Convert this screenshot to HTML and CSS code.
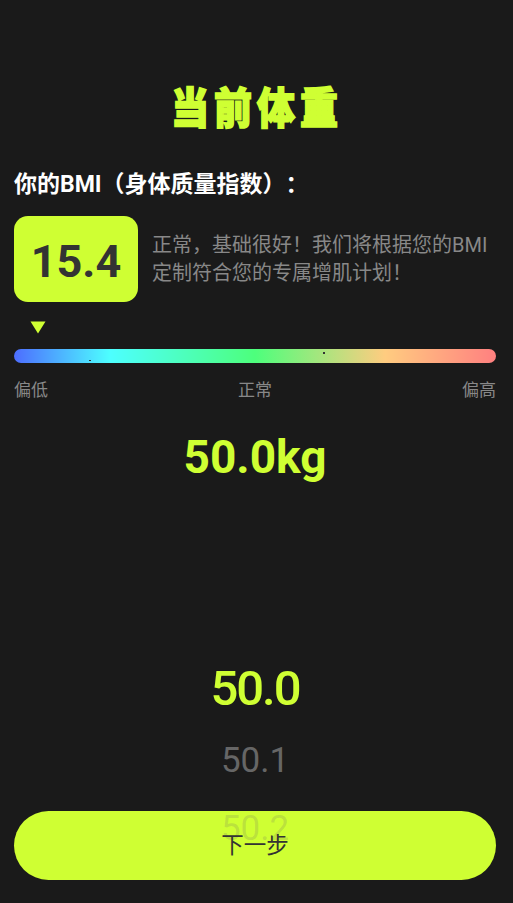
FILE: index.html
```html
<!DOCTYPE html>
<html lang="en">
<head>
    <meta charset="UTF-8">
    <meta name="viewport" content="width=device-width, initial-scale=1.0">
    <title>当前体重</title>
    <link rel="stylesheet" href="styles.css">
</head>
<body>
    <div class="container">
        <h1 class="title">当前体重</h1>
        <h2 class="bmi-heading">你的BMI（身体质量指数）：</h2>
        <div class="bmi-row">
            <div class="bmi-value">15.4</div>
            <p class="bmi-text">正常，基础很好！我们将根据您的BMI定制符合您的专属增肌计划！</p>
        </div>
        <div class="marker-row">
            <svg class="marker" width="16" height="13" viewBox="0 0 16 13">
                <path d="M0.5 0.5H15.5L8 12.5Z" fill="#cfff33"/>
            </svg>
        </div>
        <div class="scale-bar">
            <span class="speck speck-low"></span>
            <span class="speck speck-high"></span>
        </div>
        <div class="scale-labels">
            <span>偏低</span>
            <span>正常</span>
            <span>偏高</span>
        </div>
        <div class="current-weight">50.0kg</div>
        <div class="picker">
            <div class="picker-item picker-active">50.0</div>
            <div class="picker-item">50.1</div>
            <div class="picker-item picker-faded">50.2</div>
        </div>
    </div>
    <button class="next-btn"><span class="next-label">下一步</span></button>
</body>
</html>
```

FILE: styles.css
```css
body {
    margin: 0;
    height: 903px;
    overflow: hidden;
    position: relative;
    background-color: #1a1a1a;
    font-family: Roboto, "Noto Sans CJK SC", sans-serif;
    text-spacing-trim: space-all;
}

.container {
    padding: 78px 17px 0 14px;
}

.title {
    margin: 0;
    padding-left: 4px;
    height: 56px;
    line-height: 56px;
    text-align: center;
    font-family: "Noto Sans CJK SC", sans-serif;
    font-size: 38px;
    font-weight: 900;
    letter-spacing: 5px;
    color: #cfff33;
    -webkit-text-stroke: 1.5px #cfff33;
    transform: scaleY(1.15);
}

.bmi-heading {
    margin: 33px 0 0;
    height: 36px;
    line-height: 36px;
    font-size: 23px;
    font-weight: 700;
    color: #fff;
}

.bmi-row {
    display: flex;
    align-items: center;
    gap: 14px;
    margin-top: 13px;
}

.bmi-value {
    flex: none;
    width: 124px;
    height: 86px;
    line-height: 92px;
    border-radius: 14px;
    background-color: #cfff33;
    color: #333;
    font-size: 45px;
    font-weight: 700;
    text-align: center;
}

.bmi-text {
    margin: 0;
    font-size: 20px;
    line-height: 28px;
    color: #888;
}

.marker-row {
    height: 28px;
    padding: 19px 0 0 16px;
}

.marker {
    display: block;
}

.scale-bar {
    position: relative;
    height: 14px;
    border-radius: 7px;
    background: linear-gradient(to right, #4d6dff 0%, #4dffff 20%, #4dff7c 50%, #ffcc80 77%, #ff8080 100%);
}

.speck {
    position: absolute;
    background-color: #333;
}

.speck-low {
    left: 75px;
    top: 11px;
    width: 2px;
    height: 1px;
}

.speck-high {
    left: 309px;
    top: 3px;
    width: 2px;
    height: 2px;
}

.scale-labels {
    display: flex;
    justify-content: space-between;
    margin-top: 15px;
    line-height: 24px;
    font-size: 17px;
    color: #888;
}

.current-weight {
    margin-top: 25px;
    height: 60px;
    line-height: 60px;
    text-align: center;
    font-size: 46px;
    font-weight: 700;
    color: #cfff33;
}

/* sits above the button background, below its label */
.picker {
    position: relative;
    z-index: 1;
    margin-top: 163px;
}

.picker-item {
    height: 68px;
    line-height: 68px;
    text-align: center;
    font-size: 35px;
    color: #666;
}

.picker-active {
    height: 77px;
    line-height: 77px;
    font-size: 49px;
    font-weight: 500;
    letter-spacing: -2px;
    color: #cfff33;
}

.picker-faded {
    color: rgba(102, 102, 102, 0.2);
}

.next-btn {
    position: absolute;
    left: 14px;
    top: 811px;
    width: 482px;
    height: 69px;
    padding: 0 0 6px;
    border: none;
    border-radius: 35px;
    background-color: #cfff33;
    color: #333;
    font-family: Roboto, "Noto Sans CJK SC", sans-serif;
    font-size: 22.5px;
}

.next-label {
    position: relative;
    z-index: 2;
}
```
